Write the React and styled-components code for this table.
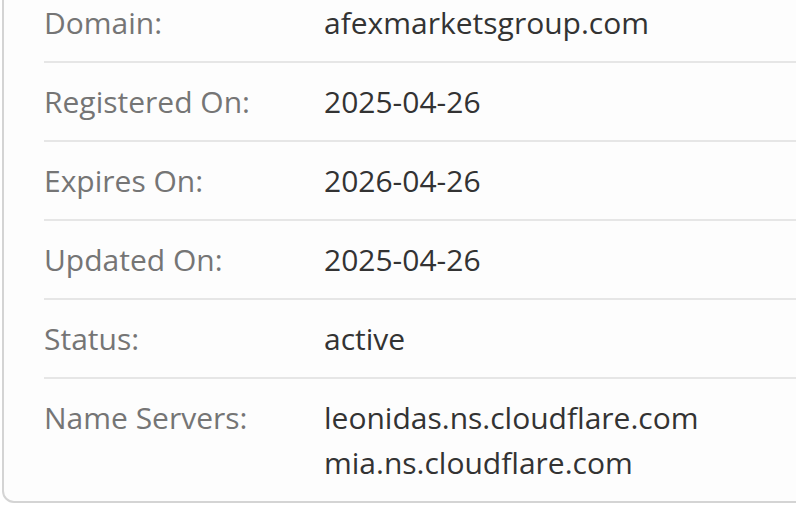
import React from "react";
import styled, { createGlobalStyle } from "styled-components";

const GlobalStyle = createGlobalStyle`
  html, body {
    margin: 0;
    padding: 0;
    background: #fff;
    overflow: hidden;
  }
`;

const Card = styled.div`
  box-sizing: border-box;
  width: 840px;
  margin: -40px 0 0 2px;
  padding: 22px 0 0 40px;
  background: #fdfdfd;
  border: 2px solid #d4d4d4;
  border-radius: 12px;
  font-family: "Open Sans", "Liberation Sans", sans-serif;
  font-size: 30px;
  line-height: 45px;
`;

const Row = styled.div`
  display: grid;
  grid-template-columns: 280px 1fr;
  padding: 16px 0 ${(p) => (p.$last ? "16px" : "16px")};
  border-bottom: ${(p) => (p.$last ? "none" : "2px solid #e6e6e6")};
`;

const Label = styled.div`
  color: #757575;
`;

const Value = styled.div`
  color: #333;
`;

const rows = [
  ["Domain:", ["afexmarketsgroup.com"]],
  ["Registered On:", ["2025-04-26"]],
  ["Expires On:", ["2026-04-26"]],
  ["Updated On:", ["2025-04-26"]],
  ["Status:", ["active"]],
  ["Name Servers:", ["leonidas.ns.cloudflare.com", "mia.ns.cloudflare.com"]],
];

export default function App() {
  return (
    <>
      <GlobalStyle />
      <Card>
        {rows.map(([label, values], i) => (
          <Row key={label} $last={i === rows.length - 1}>
            <Label>{label}</Label>
            <Value>
              {values.map((v) => (
                <div key={v}>{v}</div>
              ))}
            </Value>
          </Row>
        ))}
      </Card>
    </>
  );
}
